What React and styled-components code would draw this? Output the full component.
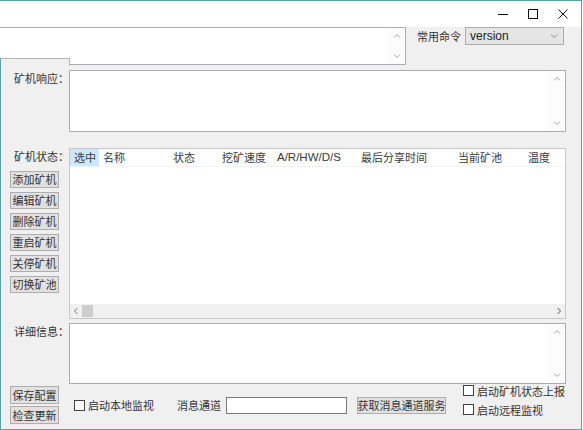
import React from 'react';
import styled, { createGlobalStyle } from 'styled-components';

const teal = '#5f9eae';

const Global = createGlobalStyle`
  html, body { margin: 0; padding: 0; background: #fff; }
  body {
    width: 583px; height: 430px; overflow: hidden;
    font-family: "Noto Sans CJK SC", "Noto Sans", sans-serif;
    font-size: 11px; color: #333;
  }
  * { box-sizing: border-box; }
`;

const Window = styled.div`
  position: relative;
  width: 582px;
  height: 430px;
  border-top: 1px solid ${teal};
  border-right: 1px solid ${teal};
  display: flex;
  flex-direction: column;
  background: #f0f0f0;
`;

const TitleBar = styled.div`
  height: 26px;
  flex: none;
  background: #fff;
  display: flex;
  justify-content: flex-end;
  align-items: center;
  padding-right: 3px;
`;

const CaptionButton = styled.div`
  width: 30px;
  height: 20px;
  display: flex;
  align-items: center;
  justify-content: center;
`;

const TopArea = styled.div`
  height: 38px;
  flex: none;
  display: flex;
  align-items: flex-start;
`;

const Box = styled.div`
  position: relative;
  display: flex;
  width: ${p => p.$w}px;
  height: ${p => p.$h}px;
  background: #fff;
  border: 1px solid #abadb3;
  ${p => p.$noLeft && 'border-left: none;'}
`;

const BoxBody = styled.div`
  flex: 1;
`;

const VScroll = styled.div`
  width: 17px;
  display: flex;
  flex-direction: column;
  justify-content: space-between;
  align-items: center;
  padding: 5px 0;
  background: #fcfcfc;
`;

const CommandPicker = styled.div`
  margin-left: 11px;
  display: flex;
  align-items: center;
  gap: 4px;
  height: 18px;
`;

const Text = styled.span`
  line-height: 16px;
  white-space: nowrap;
  color: #333;
  margin-left: ${p => p.$ml || 0}px;
`;

const Select = styled.div`
  width: 99px;
  height: 18px;
  background: #e5e5e5;
  border: 1px solid #acacac;
  display: flex;
  align-items: center;
  justify-content: space-between;
  padding: 0 5px 0 4px;
  font-family: "Liberation Sans", Arial, sans-serif;
  font-size: 12px;
  color: #222;
`;

const Occluder = styled.div`
  position: absolute;
  top: 57px;
  left: 0;
  width: 70px;
  height: 8px;
  background: #f0f0f0;
  border-top: 1px solid #b4b4b4;
  border-right: 1px solid #b4b4b4;
  border-left: 1px solid ${teal};
`;

const Main = styled.div`
  flex: 1;
  border-left: 1px solid ${teal};
  border-bottom: 1px solid ${teal};
  display: flex;
  flex-direction: column;
`;

const Row = styled.div`
  display: flex;
  margin-top: ${p => p.$mt}px;
  height: ${p => p.$h}px;
  flex: none;
`;

const LeftCol = styled.div`
  width: 68px;
  flex: none;
  display: flex;
  flex-direction: column;
`;

const Label = styled.div`
  padding-left: 13px;
  line-height: 16px;
  margin-bottom: ${p => p.$mb || 0}px;
  white-space: nowrap;
  color: #333;
`;

const Button = styled.div`
  width: ${p => p.$w || 49}px;
  height: ${p => p.$h || 17}px;
  margin-left: ${p => p.$ml ?? 9}px;
  background: #e1e1e1;
  border: 1px solid #adadad;
  display: flex;
  align-items: center;
  justify-content: center;
  white-space: nowrap;
  line-height: 15px;
  color: #333;
`;

const ButtonStack = styled.div`
  display: flex;
  flex-direction: column;
  gap: ${p => p.$gap}px;
`;

const ListView = styled.div`
  width: 497px;
  height: 171px;
  background: #fff;
  border: 1px solid #c8c8c8;
  display: flex;
  flex-direction: column;
`;

const Header = styled.div`
  display: flex;
  height: 18px;
  flex: none;
  border-bottom: 1px solid #f4f4f4;
`;

const HeaderCell = styled.div`
  width: ${p => p.$w}px;
  flex: none;
  padding-left: 4px;
  line-height: 17px;
  white-space: nowrap;
  color: #3a3a3a;
  background: ${p => (p.$active ? '#cce8ff' : 'transparent')};
  font-family: ${p => (p.$latin ? '"Liberation Sans", Arial, sans-serif' : 'inherit')};
  font-size: ${p => (p.$latin ? '11.5px' : '11px')};
`;

const ListBody = styled.div`
  flex: 1;
`;

const HScroll = styled.div`
  height: 14px;
  flex: none;
  background: #f0f0f0;
  display: flex;
  align-items: center;
`;

const ArrowCell = styled.div`
  width: 12px;
  height: 14px;
  display: flex;
  align-items: center;
  justify-content: center;
  flex: none;
`;

const Thumb = styled.div`
  width: 11px;
  height: 12px;
  background: #cdcdcd;
`;

const Spacer = styled.div`
  flex: 1;
`;

const Controls = styled.div`
  flex: 1;
  display: flex;
  align-items: center;
  padding-left: 5px;
`;

const Check = styled.label`
  display: flex;
  align-items: center;
  gap: 3px;
  white-space: nowrap;
  line-height: 16px;
  color: #333;
`;

const CheckBox = styled.span`
  width: 11px;
  height: 11px;
  border: 1px solid #444;
  background: #fff;
  flex: none;
`;

const Input = styled.div`
  width: 121px;
  height: 17px;
  margin-left: ${p => p.$ml}px;
  background: #fff;
  border: 1px solid #7a7a7a;
`;

const CheckColumn = styled.div`
  display: flex;
  flex-direction: column;
  gap: 3px;
  margin-left: 17px;
  margin-top: -10px;
`;

const Chevron = ({ dir = 'down', color = '#a6a6a6' }) => {
  const d = {
    up: 'M1 4.5 L4 1.5 L7 4.5',
    down: 'M1 1.5 L4 4.5 L7 1.5',
    left: 'M4.5 1 L1.5 4 L4.5 7',
    right: 'M1.5 1 L4.5 4 L1.5 7',
  }[dir];
  const vertical = dir === 'up' || dir === 'down';
  return (
    <svg width={vertical ? 8 : 6} height={vertical ? 6 : 8} viewBox={vertical ? '0 0 8 6' : '0 0 6 8'}>
      <path d={d} fill="none" stroke={color} strokeWidth="1" />
    </svg>
  );
};

const TextBox = ({ w, h, noLeft }) => (
  <Box $w={w} $h={h} $noLeft={noLeft}>
    <BoxBody />
    <VScroll>
      <Chevron dir="up" />
      <Chevron dir="down" />
    </VScroll>
  </Box>
);

const columns = [
  { t: '选中', w: 29, active: true },
  { t: '名称', w: 70 },
  { t: '状态', w: 49 },
  { t: '挖矿速度', w: 55 },
  { t: 'A/R/HW/D/S', w: 84, latin: true },
  { t: '最后分享时间', w: 97 },
  { t: '当前矿池', w: 70 },
  { t: '温度', w: 40 },
];

const minerButtons = ['添加矿机', '编辑矿机', '删除矿机', '重启矿机', '关停矿机', '切换矿池'];

export default function App() {
  return (
    <>
      <Global />
      <Window>
        <TitleBar>
          <CaptionButton>
            <svg width="10" height="10" viewBox="0 0 10 10"><path d="M0 5.5 H10" stroke="#111" strokeWidth="1" /></svg>
          </CaptionButton>
          <CaptionButton>
            <svg width="10" height="10" viewBox="0 0 10 10"><rect x="0.5" y="0.5" width="9" height="9" fill="none" stroke="#111" strokeWidth="1" /></svg>
          </CaptionButton>
          <CaptionButton>
            <svg width="10" height="10" viewBox="0 0 10 10"><path d="M0.5 0.5 L9.5 9.5 M9.5 0.5 L0.5 9.5" stroke="#111" strokeWidth="1" /></svg>
          </CaptionButton>
        </TitleBar>

        <TopArea>
          <TextBox w={406} h={38} noLeft />
          <CommandPicker>
            <Text>常用命令</Text>
            <Select>
              <span>version</span>
              <Chevron dir="down" color="#888" />
            </Select>
          </CommandPicker>
        </TopArea>

        <Occluder />

        <Main>
          <Row $mt={5} $h={62}>
            <LeftCol>
              <Label>矿机响应：</Label>
            </LeftCol>
            <TextBox w={497} h={62} />
          </Row>

          <Row $mt={16} $h={171}>
            <LeftCol>
              <Label $mb={7}>矿机状态：</Label>
              <ButtonStack $gap={4}>
                {minerButtons.map(b => (
                  <Button key={b}>{b}</Button>
                ))}
              </ButtonStack>
            </LeftCol>
            <ListView>
              <Header>
                {columns.map(c => (
                  <HeaderCell key={c.t} $w={c.w} $active={c.active} $latin={c.latin}>
                    {c.t}
                  </HeaderCell>
                ))}
              </Header>
              <ListBody />
              <HScroll>
                <ArrowCell><Chevron dir="left" color="#777" /></ArrowCell>
                <Thumb />
                <Spacer />
                <ArrowCell><Chevron dir="right" color="#555" /></ArrowCell>
              </HScroll>
            </ListView>
          </Row>

          <Row $mt={4} $h={61}>
            <LeftCol>
              <Label>详细信息：</Label>
            </LeftCol>
            <TextBox w={497} h={61} />
          </Row>

          <Row $mt={2} $h={38}>
            <LeftCol>
              <ButtonStack $gap={2}>
                <Button $h={18}>保存配置</Button>
                <Button $h={18}>检查更新</Button>
              </ButtonStack>
            </LeftCol>
            <Controls>
              <Check>
                <CheckBox />
                启动本地监视
              </Check>
              <Text $ml={23}>消息通道</Text>
              <Input $ml={5} />
              <Button $w={89} $h={17} $ml={10}>获取消息通道服务</Button>
              <CheckColumn>
                <Check>
                  <CheckBox />
                  启动矿机状态上报
                </Check>
                <Check>
                  <CheckBox />
                  启动远程监视
                </Check>
              </CheckColumn>
            </Controls>
          </Row>
        </Main>
      </Window>
    </>
  );
}
